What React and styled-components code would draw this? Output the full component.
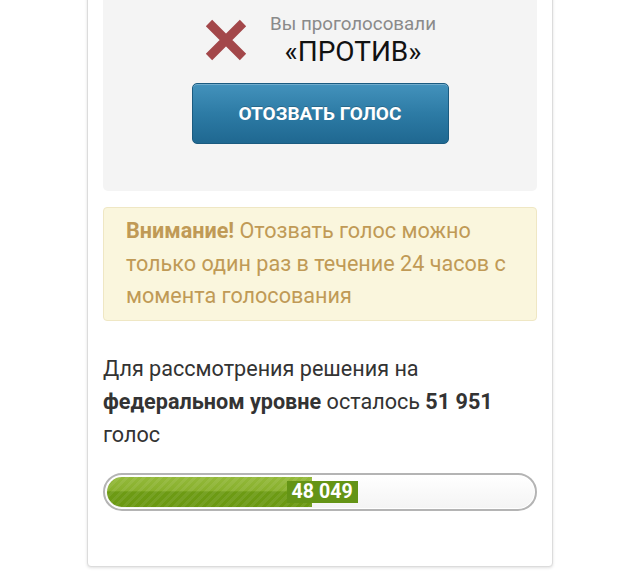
import React from 'react';
import styled, { createGlobalStyle } from 'styled-components';

const GlobalStyle = createGlobalStyle`
  html, body {
    margin: 0;
    padding: 0;
    background: #ffffff;
    overflow: hidden;
  }
  body {
    font-family: Roboto, "Noto Sans", "Liberation Sans", sans-serif;
    color: #333;
  }
`;

const Page = styled.div`
  width: 640px;
  height: 575px;
  overflow: hidden;
`;

const Card = styled.div`
  width: 466px;
  box-sizing: border-box;
  margin: -40px auto 0;
  padding: 16px 15px 55px;
  background: #fff;
  border: 1px solid #dcdcdc;
  border-radius: 4px;
  box-shadow: 0 1px 3px rgba(0, 0, 0, 0.12);
`;

const VotePanel = styled.div`
  background: #f4f4f4;
  border-radius: 5px;
  padding: 35px 0 47px;
  display: flex;
  flex-direction: column;
  align-items: center;
`;

const VoteRow = styled.div`
  display: flex;
  align-items: center;
  gap: 22px;
  margin-bottom: 15px;
`;

const VoteText = styled.div`
  text-align: center;
`;

const VoteLabel = styled.div`
  font-size: 18.8px;
  line-height: 24px;
  color: #8a8a8a;
`;

const VoteValue = styled.div`
  font-size: 28px;
  line-height: 32px;
  color: #111;
`;

const RevokeButton = styled.button`
  width: 257px;
  height: 61px;
  border: 1px solid #1b5b80;
  border-radius: 5px;
  background: linear-gradient(180deg, #4392bc 0%, #2d7ba5 50%, #1f6891 100%);
  box-shadow: inset 0 1px 0 rgba(255, 255, 255, 0.25);
  color: #fff;
  font-family: Roboto, "Noto Sans", sans-serif;
  font-size: 19px;
  font-weight: 700;
  text-shadow: 0 -1px 0 rgba(0, 0, 0, 0.2);
  cursor: pointer;
`;

const Warning = styled.div`
  margin-top: 16px;
  padding: 7px 12px 7px 22px;
  background: #faf6dd;
  border: 1px solid #efe7c4;
  border-radius: 4px;
  color: #c09a56;
  font-size: 21.6px;
  line-height: 32.5px;

  strong {
    font-weight: 700;
  }
`;

const Remaining = styled.p`
  margin: 31px 0 0;
  font-size: 21.6px;
  line-height: 33px;
  color: #333;

  strong {
    font-weight: 700;
  }
`;

const Progress = styled.div`
  position: relative;
  margin-top: 22px;
  height: 38px;
  box-sizing: border-box;
  border: 2px solid #b4b4b4;
  border-radius: 19px;
  padding: 2px;
  background: linear-gradient(180deg, #ffffff 0%, #f4f4f4 100%);
  box-shadow: inset 0 0 0 1px #fff;
`;

const Fill = styled.div`
  height: 100%;
  border-radius: 15px 0 0 15px;
  background:
    repeating-linear-gradient(
      -45deg,
      rgba(255, 255, 255, 0.07) 0 3px,
      rgba(255, 255, 255, 0) 3px 6px
    ),
    linear-gradient(180deg, #93b93a 0%, #88b02c 45%, #6d9b14 50%, #6a9812 100%);
`;

const FillLabel = styled.span`
  position: absolute;
  top: 6px;
  height: 22px;
  padding: 0 5px;
  background: #649416;
  color: #fff;
  font-size: 19.6px;
  font-weight: 700;
  line-height: 22px;
`;

function CrossIcon() {
  return (
    <svg width="44" height="44" viewBox="0 0 44 44">
      <path d="M5 5 L39 39 M39 5 L5 39" stroke="#a3474a" strokeWidth="9" />
    </svg>
  );
}

export default function App() {
  const votes = 48049;
  const total = 100000;
  const pct = (votes / total) * 100;

  return (
    <Page>
      <GlobalStyle />
      <Card>
        <VotePanel>
          <VoteRow>
            <CrossIcon />
            <VoteText>
              <VoteLabel>Вы проголосовали</VoteLabel>
              <VoteValue>«ПРОТИВ»</VoteValue>
            </VoteText>
          </VoteRow>
          <RevokeButton>ОТОЗВАТЬ ГОЛОС</RevokeButton>
        </VotePanel>

        <Warning>
          <strong>Внимание!</strong> Отозвать голос можно только один раз в течение 24 часов с момента голосования
        </Warning>

        <Remaining>
          Для рассмотрения решения на <strong>федеральном уровне</strong> осталось <strong>51 951</strong> голос
        </Remaining>

        <Progress>
          <Fill style={{ width: `${pct}%` }} />
          <FillLabel style={{ left: `calc(${pct}% - 25px)` }}>48 049</FillLabel>
        </Progress>
      </Card>
    </Page>
  );
}
